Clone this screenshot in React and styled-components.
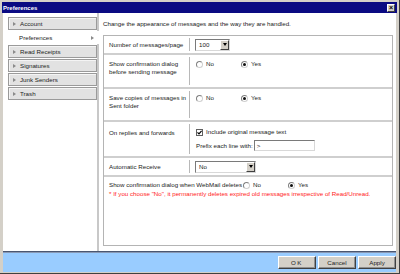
import styled, { createGlobalStyle } from 'styled-components'

const GlobalStyle = createGlobalStyle`
    html, body { margin: 0; padding: 0; }
    body {
        font-family: "Liberation Sans", Arial, sans-serif;
        font-size: 6.2px;
        color: #222;
    }
`

const TABS = ['Account', 'Preferences', 'Read Receipts', 'Signatures', 'Junk Senders', 'Trash']

const Window = styled.div`
    width: 400px;
    height: 274px;
    box-sizing: border-box;
    background: #d4d0c8;
    padding: 2px 3px 1px 3px;
    border-right: 1px solid #404040;
    border-bottom: 1px solid #404040;
    display: flex;
    flex-direction: column;
`

const TitleBar = styled.div`
    height: 11px;
    margin: 0 -1px;
    background: #0a0a82;
    color: #fff;
    display: flex;
    align-items: center;
    justify-content: space-between;
    padding: 0 2px 0 1px;
    font-weight: bold;
    font-size: 6px;
`

const CloseBtn = styled.div`
    width: 8px;
    height: 8px;
    background: #d4d0c8;
    border: 1px solid #fff;
    border-right-color: #404040;
    border-bottom-color: #404040;
    box-sizing: border-box;
    display: flex;
    align-items: center;
    justify-content: center;
    color: #000;
    font-size: 7px;
    line-height: 1;
    font-weight: bold;
`

const Body = styled.div`
    flex: 1;
    display: flex;
    background: #fff;
    min-height: 0;
`

const Sidebar = styled.div`
    width: 96px;
    box-sizing: border-box;
    padding: 4px 0 0 5px;
    border-right: 2px solid #c8c8c8;
    display: flex;
    flex-direction: column;
    gap: 1px;
`

const Tab = styled.div`
    height: 13px;
    box-sizing: border-box;
    display: flex;
    align-items: center;
    gap: 4px;
    position: relative;
    background: ${p => p.$active ? '#fff' : '#e2e2e2'};
    border: 1px solid ${p => p.$active ? '#fff' : '#9a9a9a'};
    box-shadow: ${p => p.$active ? 'none' : 'inset 1px 1px #f4f4f4'};
    margin-right: ${p => p.$active ? '-2px' : '0'};
    padding-left: ${p => p.$active ? '10px' : '4px'};
    color: #222;
`

const Arrow = styled.span`
    width: 0;
    height: 0;
    border-left: 3px solid #8a8a8a;
    border-top: 2px solid transparent;
    border-bottom: 2px solid transparent;
`

const ActiveArrow = styled(Arrow)`
    position: absolute;
    right: 4px;
    top: 4px;
`

const Main = styled.div`
    flex: 1;
    padding: 7px 3px 5px 4px;
    display: flex;
    flex-direction: column;
`

const Intro = styled.div`
    line-height: 8px;
    height: 8px;
    margin-bottom: 7px;
`

const Table = styled.div`
    flex: 1;
    border: 1px solid #b4b4b4;
    display: flex;
    flex-direction: column;
`

const Row = styled.div`
    display: flex;
    height: ${p => p.$h}px;
    border-bottom: 2px solid #cfcfcf;
    box-sizing: border-box;
    align-items: stretch;
    padding: 2px 0;
`

const Label = styled.div`
    width: 86px;
    box-sizing: border-box;
    border-right: 1px solid #b8b8b8;
    padding: ${p => p.$center ? '0 2px 0 5px' : `${p.$top ?? 2}px 2px 0 5px`};
    display: flex;
    flex-direction: column;
    justify-content: ${p => p.$center ? 'center' : 'flex-start'};
    line-height: 8px;
    white-space: nowrap;
`

const Value = styled.div`
    flex: 1;
    padding: ${p => p.$center ? '0 0 0 5px' : `${p.$top ?? 2}px 0 0 6px`};
    display: flex;
    flex-direction: ${p => p.$column ? 'column' : 'row'};
    align-items: ${p => p.$column ? 'flex-start' : (p.$center ? 'center' : 'flex-start')};
    gap: ${p => p.$column ? '4px' : '0'};
    line-height: 8px;
`

const RadioOpt = styled.label`
    display: flex;
    align-items: center;
    gap: 3px;
    width: ${p => p.$w ?? 45}px;
    height: 8px;
`

const Circle = styled.span`
    width: 7px;
    height: 7px;
    box-sizing: border-box;
    border-radius: 50%;
    border: 1px solid #808080;
    border-right-color: #d0d0d0;
    border-bottom-color: #d0d0d0;
    background: #fff;
    display: flex;
    align-items: center;
    justify-content: center;

    &::after {
        content: '';
        width: 3px;
        height: 3px;
        border-radius: 50%;
        background: ${p => p.$on ? '#111' : 'transparent'};
    }
`

const Check = styled.span`
    width: 7px;
    height: 7px;
    box-sizing: border-box;
    border: 1px solid #606060;
    background: #fff;
    display: flex;
    align-items: center;
    justify-content: center;
`

const SelectBox = styled.div`
    width: ${p => p.$w}px;
    height: 12px;
    box-sizing: border-box;
    border: 1px solid #7a7a7a;
    border-right-color: #d8d8d8;
    border-bottom-color: #d8d8d8;
    background: #fff;
    display: flex;
    align-items: center;
    padding-left: 3px;
    justify-content: space-between;
`

const DropBtn = styled.span`
    width: 9px;
    height: 10px;
    box-sizing: border-box;
    background: #d4d0c8;
    border: 1px solid #fff;
    border-right-color: #404040;
    border-bottom-color: #404040;
    display: flex;
    align-items: center;
    justify-content: center;

    &::after {
        content: '';
        border-top: 3px solid #000;
        border-left: 2px solid transparent;
        border-right: 2px solid transparent;
    }
`

const TextInput = styled.div`
    width: 61px;
    height: 11px;
    box-sizing: border-box;
    border: 1px solid #7a7a7a;
    border-right-color: #d8d8d8;
    border-bottom-color: #d8d8d8;
    background: #fff;
    padding-left: 2px;
    display: flex;
    align-items: center;
`

const Inline = styled.div`
    display: flex;
    align-items: center;
    gap: ${p => p.$gap ?? 1}px;
    white-space: nowrap;
`

const LastRow = styled.div`
    flex: 1;
    padding: 4px 5px;
    line-height: 8px;
`

const Note = styled.div`
    color: #ff1a1a;
    margin-top: 1px;
    white-space: nowrap;
`

const Footer = styled.div`
    height: 19px;
    border-top: 1px solid #4a5670;
    box-shadow: inset 0 1px #8898b4;
    background: #99ccff;
    display: flex;
    justify-content: flex-end;
    align-items: center;
    gap: 2px;
    padding-top: 1px;
`

const Button = styled.button`
    width: 38px;
    height: 13px;
    padding: 0;
    font-family: inherit;
    font-size: 6.2px;
    color: #222;
    background: #d4d0c8;
    border: 1px solid #fff;
    border-right-color: #404040;
    border-bottom-color: #404040;
    box-shadow: inset -1px -1px #909090;
    letter-spacing: ${p => p.$spaced ? '1.5px' : '0'};
`

function Radio({ on, label, w }) {
    return (
        <RadioOpt $w={w}>
            <Circle $on={on} />
            {label}
        </RadioOpt>
    )
}

export default function App() {
    return (
        <>
            <GlobalStyle />
            <Window>
                <TitleBar>
                    <span>Preferences</span>
                    <CloseBtn>×</CloseBtn>
                </TitleBar>
                <Body>
                    <Sidebar>
                        {TABS.map(t => t === 'Preferences' ? (
                            <Tab key={t} $active>{t}<ActiveArrow /></Tab>
                        ) : (
                            <Tab key={t}><Arrow />{t}</Tab>
                        ))}
                    </Sidebar>
                    <Main>
                        <Intro>Change the appearance of messages and the way they are handled.</Intro>
                        <Table>
                            <Row $h={19}>
                                <Label $center>Number of messages/page</Label>
                                <Value $center>
                                    <SelectBox $w={35}>100<DropBtn /></SelectBox>
                                </Value>
                            </Row>
                            <Row $h={34}>
                                <Label $top={3}>
                                    <span>Show confirmation dialog</span>
                                    <span>before sending message</span>
                                </Label>
                                <Value $top={3}>
                                    <Radio label="No" />
                                    <Radio on label="Yes" />
                                </Value>
                            </Row>
                            <Row $h={33}>
                                <Label $top={3}>
                                    <span>Save copies of messages in</span>
                                    <span>Sent folder</span>
                                </Label>
                                <Value $top={3}>
                                    <Radio label="No" />
                                    <Radio on label="Yes" />
                                </Value>
                            </Row>
                            <Row $h={36}>
                                <Label $top={5}>On replies and forwards</Label>
                                <Value $column $top={4}>
                                    <Inline $gap={3}>
                                        <Check>
                                            <svg width="5" height="5" viewBox="0 0 5 5">
                                                <path d="M0.5 2.3 L2 3.8 L4.6 0.8" stroke="#000" strokeWidth="1.2" fill="none" />
                                            </svg>
                                        </Check>
                                        Include original message text
                                    </Inline>
                                    <Inline>
                                        Prefix each line with:
                                        <TextInput>&gt;</TextInput>
                                    </Inline>
                                </Value>
                            </Row>
                            <Row $h={19}>
                                <Label $center>Automatic Receive</Label>
                                <Value $center>
                                    <SelectBox $w={61}>No<DropBtn /></SelectBox>
                                </Value>
                            </Row>
                            <LastRow>
                                <Inline>
                                    Show confirmation dialog when WebMail deletes
                                    <Radio label="No" w={44} />
                                    <Radio on label="Yes" />
                                </Inline>
                                <Note>* If you choose "No", it permanently deletes expired old messages irrespective of Read/Unread.</Note>
                            </LastRow>
                        </Table>
                    </Main>
                </Body>
                <Footer>
                    <Button $spaced>OK</Button>
                    <Button>Cancel</Button>
                    <Button>Apply</Button>
                </Footer>
            </Window>
        </>
    )
}
